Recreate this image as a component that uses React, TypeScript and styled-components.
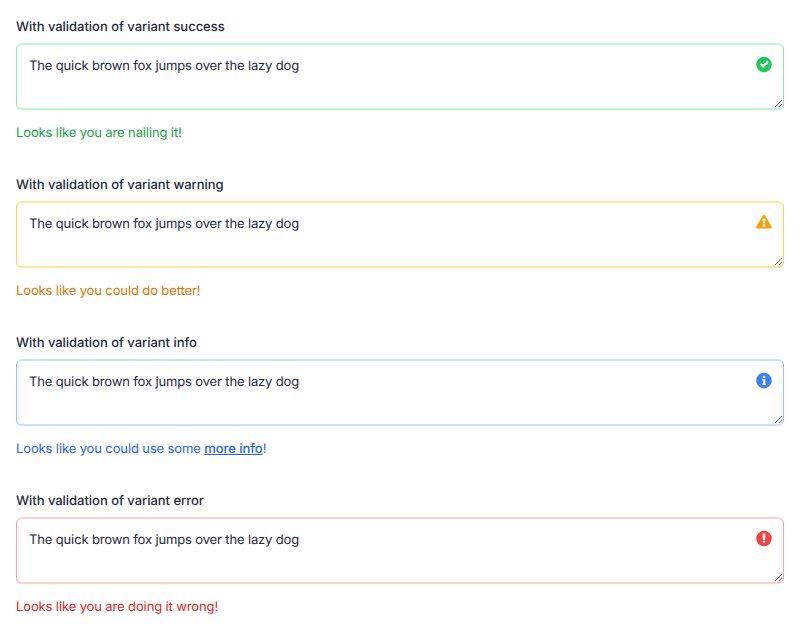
import React from "react";
import styled, { createGlobalStyle } from "styled-components";

const Global = createGlobalStyle`
  *, *::before, *::after { box-sizing: border-box; }
  body { margin: 0; background: #fff; }
`;

const Page = styled.main`
  display: flex;
  flex-direction: column;
  gap: 40px;
  padding: 17px 16px 15px;
  font-family: Inter, sans-serif;
  font-size: 13px;
  line-height: 20px;
  letter-spacing: -0.14px;
  color: #1e293b;
  text-rendering: geometricPrecision;
  -webkit-font-smoothing: antialiased;
`;

const Field = styled.div`
  display: flex;
  flex-direction: column;
  height: 118px;
`;

const Label = styled.label`
  font-weight: 500;
  letter-spacing: -0.03px;
  height: 20px;
  margin-bottom: 6px;
`;

const Control = styled.div`
  position: relative;
  display: flex;
  height: 67px;
`;

const Area = styled.textarea<{ $border: string; $edge: string }>`
  width: 100%;
  height: 67px;
  margin: 0;
  padding: 11px 12px 9px;
  border: 1px solid ${(p) => p.$border};
  border-top: 2px solid ${(p) => p.$edge};
  border-bottom: 2px solid ${(p) => p.$edge};
  border-radius: 6px;
  outline: none;
  background: #fff;
  box-shadow: 0 1px 2px rgba(0, 0, 0, 0.03);
  color: #1e293b;
  font: inherit;
  letter-spacing: inherit;
  text-rendering: inherit;
  resize: vertical;
`;

const IconSlot = styled.span<{ $color: string }>`
  position: absolute;
  top: 13px;
  right: 12px;
  display: flex;
  color: ${(p) => p.$color};
`;

const Message = styled.p<{ $color: string }>`
  margin: 13px 0 0;
  letter-spacing: -0.12px;
  color: ${(p) => p.$color};
`;

const MoreInfo = styled.a`
  color: inherit;
  font-weight: 500;
  letter-spacing: -0.05px;
  text-decoration: underline;
`;

type Variant = "success" | "warning" | "info" | "error";

const shapes: Record<Variant, string> = {
  success:
    "M256 8a248 248 0 1 0 0 496 248 248 0 1 0 0-496zM393 199L243 349c-8 8-20 8-28 0l-82-82c-8-8-8-20 0-28l22-22c8-8 20-8 28 0l46 46 114-114c8-8 20-8 28 0l22 22c8 8 8 20 0 28z",
  warning:
    "M256 25c15 0 29 8 36 20l208 352c16 28-4 63-36 63H48c-32 0-52-35-36-63L220 45c7-12 21-20 36-20zM226 150c-7 0-12 5-12 12l7 126c0 6 5 11 12 11h46c7 0 12-5 12-11l7-126c0-7-5-12-12-12zM256 326a40 40 0 1 0 0 80 40 40 0 1 0 0-80z",
  info:
    "M256 8C119 8 8 119 8 256s111 248 248 248 248-111 248-248S393 8 256 8zm0 94c23.200 0 42 18.800 42 42s-18.800 42-42 42-42-18.800-42-42 18.800-42 42-42zm60 282c0 6.600-5.400 12-12 12h-88c-6.600 0-12-5.400-12-12v-24c0-6.600 5.400-12 12-12h12v-84h-12c-6.600 0-12-5.400-12-12v-28c0-6.600 5.400-12 12-12h68c6.600 0 12 5.400 12 12v124h8c6.600 0 12 5.400 12 12v24z",
  error:
    "M256 8a248 248 0 1 0 0 496 248 248 0 1 0 0-496zM224 96h64c7 0 12 5 12 12l-7 172c0 7-5 12-12 12h-50c-7 0-12-5-12-12l-7-172c0-7 5-12 12-12zM256 322a40 40 0 1 1 0 80 40 40 0 1 1 0-80z",
};

const fields: {
  variant: Variant;
  border: string;
  edge: string;
  icon: string;
  text: string;
  drop: number;
  message: React.ReactNode;
}[] = [
  { variant: "success", border: "#86efac", edge: "#c0f6d4", icon: "#22c55e", text: "#16a34a", drop: 0.5, message: "Looks like you are nailing it!" },
  { variant: "warning", border: "#fcd34d", edge: "#fde8a3", icon: "#f59e0b", text: "#d97706", drop: 0, message: "Looks like you could do better!" },
  {
    variant: "info",
    border: "#93c5fd",
    edge: "#c7e1fe",
    icon: "#3b82f6",
    text: "#2563eb",
    drop: 0.5,
    message: <>Looks like you could use some <MoreInfo>more info</MoreInfo>!</>,
  },
  { variant: "error", border: "#fca5a5", edge: "#fdd0d0", icon: "#ef4444", text: "#dc2626", drop: 0.5, message: "Looks like you are doing it wrong!" },
];

export default function App() {
  return (
    <>
      <Global />
      <Page>
        {fields.map((f) => (
          <Field key={f.variant}>
            <Label htmlFor={f.variant}>With validation of variant {f.variant}</Label>
            <Control>
              <Area
                id={f.variant}
                $border={f.border}
                $edge={f.edge}
                defaultValue="The quick brown fox jumps over the lazy dog"
              />
              <IconSlot $color={f.icon}>
                <svg width="16" height="17" viewBox="0 0 16 17" fill="currentColor" fillRule="evenodd" aria-hidden="true">
                  <path transform={`translate(0 ${f.drop}) scale(0.03125)`} d={shapes[f.variant]} />
                </svg>
              </IconSlot>
            </Control>
            <Message $color={f.text}>{f.message}</Message>
          </Field>
        ))}
      </Page>
    </>
  );
}
